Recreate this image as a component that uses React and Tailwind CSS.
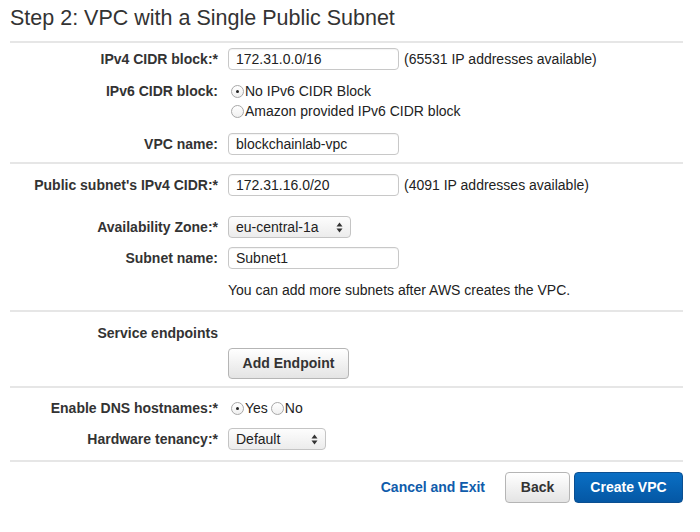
const FONT = "font-['Helvetica_Neue','Liberation_Sans',Arial,sans-serif]"

function Divider() {
  return <div className="h-[2px] bg-[#e6e6e6] w-[673px]" />
}

function Row({ label, className = '', children }) {
  return (
    <div className={`flex items-center gap-[10px] ${className}`}>
      <div className="w-[208px] text-right text-[14px] font-bold text-[#333] shrink-0">{label}</div>
      <div className="flex items-center">{children}</div>
    </div>
  )
}

function Input({ value, w = 'w-[171px]' }) {
  return (
    <div className={`${w} h-[22px] border border-[#c8c8c8] rounded-[4px] bg-white pl-[7px] flex items-center text-[14px] text-[#222] shadow-[inset_0_1px_1px_rgba(0,0,0,0.05)]`}>
      {value}
    </div>
  )
}

function Select({ value, w }) {
  return (
    <div className={`${w} h-[22px] border border-[#c4c4c4] rounded-[4px] bg-gradient-to-b from-[#fdfdfd] to-[#ececec] pl-[7px] pr-[7px] flex items-center justify-between text-[14px] text-[#222]`}>
      <span>{value}</span>
      <svg width="7" height="11" viewBox="0 0 7 11">
        <path d="M3.5 0.5L6.5 4.5H0.5Z" fill="#333" />
        <path d="M3.5 10.5L6.5 6.5H0.5Z" fill="#333" />
      </svg>
    </div>
  )
}

function Radio({ checked, label }) {
  return (
    <label className="flex items-center text-[14px] text-[#222]">
      <span className="ml-[3px] w-[13px] h-[13px] rounded-full border border-[#a8a8a8] bg-gradient-to-b from-white to-[#f0f0f0] flex items-center justify-center shrink-0">
        {checked && <span className="w-[3px] h-[3px] rounded-full bg-[#222]" />}
      </span>
      <span className="ml-[1px]">{label}</span>
    </label>
  )
}

function Button({ children, className = '' }) {
  return (
    <button type="button" className={`h-[31px] rounded-[4px] border text-[14px] font-bold ${className}`}>
      {children}
    </button>
  )
}

export default function App() {
  return (
    <div className={`w-[700px] h-[532px] bg-white px-[10px] ${FONT}`}>
      <h1 className="text-[21.5px] leading-none text-[#333] pt-[8px] h-[41px]">Step 2: VPC with a Single Public Subnet</h1>
      <Divider />

      <Row label="IPv4 CIDR block:*" className="mt-[5px] h-[22px]">
        <Input value="172.31.0.0/16" />
        <span className="ml-[5px] text-[14px] text-[#222]">(65531 IP addresses available)</span>
      </Row>
      <div className="flex gap-[10px] mt-[11px]">
        <div className="w-[208px] text-right text-[14px] font-bold text-[#333] h-[20px] leading-[20px]">IPv6 CIDR block:</div>
        <div className="flex flex-col">
          <div className="h-[20px] flex items-center"><Radio checked label="No IPv6 CIDR Block" /></div>
          <div className="h-[20px] flex items-center"><Radio label="Amazon provided IPv6 CIDR block" /></div>
        </div>
      </div>
      <Row label="VPC name:" className="mt-[12px] h-[22px]">
        <Input value="blockchainlab-vpc" />
      </Row>
      <div className="mt-[7px]"><Divider /></div>

      <Row label="Public subnet's IPv4 CIDR:*" className="mt-[10px] h-[22px]">
        <Input value="172.31.16.0/20" />
        <span className="ml-[5px] text-[14px] text-[#222]">(4091 IP addresses available)</span>
      </Row>
      <Row label="Availability Zone:*" className="mt-[20px] h-[22px]">
        <Select value="eu-central-1a" w="w-[123px]" />
      </Row>
      <Row label="Subnet name:" className="mt-[9px] h-[22px]">
        <Input value="Subnet1" />
      </Row>
      <Row label="" className="mt-[12px] h-[18px]">
        <span className="text-[14px] text-[#222]">You can add more subnets after AWS creates the VPC.</span>
      </Row>
      <div className="mt-[11px]"><Divider /></div>

      <Row label="Service endpoints" className="mt-[11px] h-[20px]" />
      <Row label="" className="mt-[5px] h-[31px]">
        <Button className="w-[121px] border-[#b5b5b5] bg-gradient-to-b from-white to-[#e4e4e4] text-[#333]">Add Endpoint</Button>
      </Row>
      <div className="mt-[7px]"><Divider /></div>

      <Row label="Enable DNS hostnames:*" className="mt-[10px] h-[20px]">
        <Radio checked label="Yes" />
        <Radio label="No" />
      </Row>
      <Row label="Hardware tenancy:*" className="mt-[10px] h-[22px]">
        <Select value="Default" w="w-[98px]" />
      </Row>
      <div className="mt-[10px]"><Divider /></div>

      <div className="w-[673px] flex justify-end items-center mt-[10px]">
        <a className="text-[14px] font-bold text-[#0f5cab] mr-[20px]">Cancel and Exit</a>
        <Button className="w-[65px] border-[#b5b5b5] bg-gradient-to-b from-white to-[#e4e4e4] text-[#333] mr-[4px]">Back</Button>
        <Button className="w-[109px] border-[#0b4f91] bg-gradient-to-b from-[#0a6fc4] to-[#0557a4] text-white">Create VPC</Button>
      </div>
    </div>
  )
}
